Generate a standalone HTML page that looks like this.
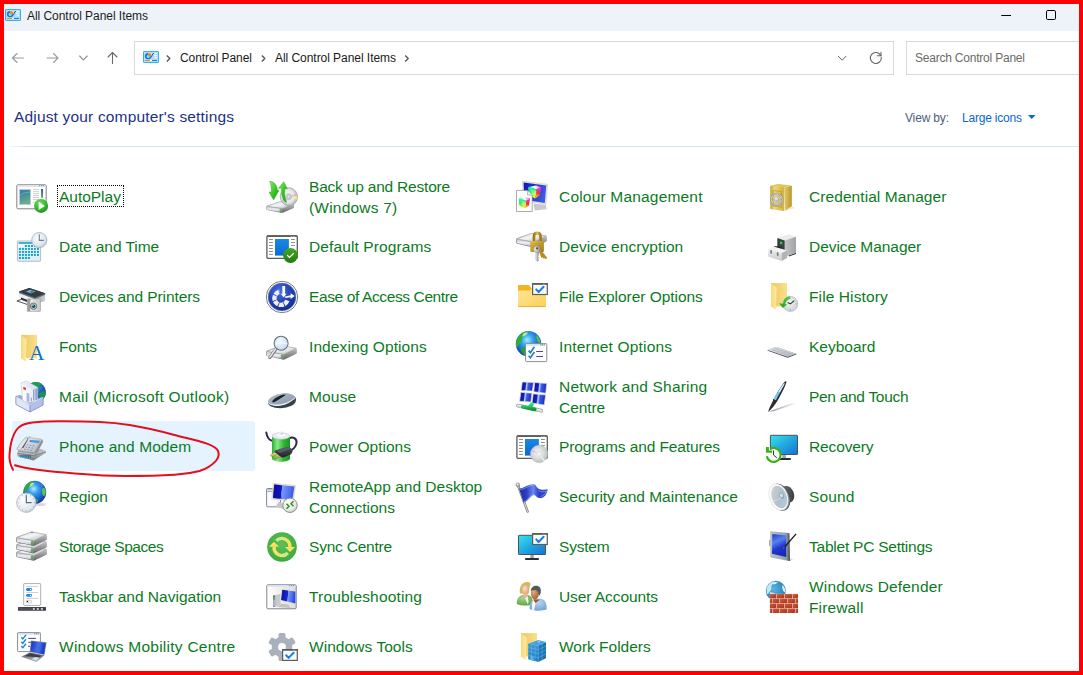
<!DOCTYPE html>
<html lang="en">
<head>
<meta charset="utf-8">
<title>All Control Panel Items</title>
<style>
html,body{margin:0;padding:0;}
body{width:1083px;height:675px;overflow:hidden;background:#fff;font-family:"Liberation Sans",sans-serif;position:relative;}
#frame{position:absolute;left:0;top:0;width:1075px;height:667px;border:4px solid #ff0000;pointer-events:none;z-index:50;}
#titlebar{position:absolute;left:4px;top:4px;width:1075px;height:27px;background:#eef3fa;}
#title{position:absolute;left:27px;top:9px;font-size:12px;line-height:15px;color:#1c1c1c;white-space:nowrap;letter-spacing:-0.048px;}
.abs{position:absolute;}
.box{position:absolute;top:41px;height:32px;border:1px solid #d9d9d9;background:#fff;}
.t12{position:absolute;font-size:12px;line-height:15px;white-space:nowrap;color:#1a1a1a;}
#heading{position:absolute;left:14px;top:108px;font-size:15.5px;line-height:18px;color:#1e3287;white-space:nowrap;letter-spacing:0.17px;}
#divider{position:absolute;left:4px;top:146px;width:1075px;height:1px;background:linear-gradient(to right,#fff 0,#d6e2f5 22px,#d6e2f5 100%);}
.it{position:absolute;width:243px;height:50px;}
.it.sel{background:#e5f3ff;border-radius:3px;}
.it .ic{position:absolute;left:3px;top:9px;overflow:visible;}
.it .tx{position:absolute;left:47px;top:0;height:50px;display:flex;flex-direction:column;justify-content:center;font-size:15.5px;line-height:21px;color:#0b7a1e;white-space:nowrap;}
.it .tx span{display:block;}
.it.two .tx{top:1px;}
#focus{position:absolute;left:57px;top:185px;width:65px;height:20px;border:1px dotted #000;}
</style>
</head>
<body>
<div id="titlebar"></div>
<svg class="abs" style="left:5px;top:9px" width="16" height="12" viewBox="0 0 16 13" preserveAspectRatio="none"><rect x="0.500" y="0.500" width="15" height="12" rx="0.600" fill="#b4def8" stroke="#28b0ec" stroke-width="1"/><path d="M5.200 2.200a3.400 3.400 0 1 0 3.400 3.800h-3.400z" fill="#1478d4"/><path d="M5.200 4.400a1.600 1.600 0 1 0 1.600 1.600h-1.600z" fill="#b4def8"/><path d="M5.200 2.200a3.400 3.400 0 0 1 3.200 3.200h-3.200z" fill="#f08a10"/><path d="M7.500 6.500c2.500 0 1-4 3.500-4" stroke="#1c54b0" stroke-width="1" fill="none"/><path d="M11.500 2.800h2.500M11 5h3M11.500 7.200h2.500" stroke="#fff" stroke-width="0.900"/><path d="M2 10.200h5" stroke="#f08a10" stroke-width="1.100"/><path d="M7 10.200h2" stroke="#fff" stroke-width="1.100"/><path d="M9 10.200h5" stroke="#1478d4" stroke-width="1.100"/></svg>
<div id="title">All Control Panel Items</div>
<svg class="abs" style="left:995px;top:4px" width="84" height="27" viewBox="0 0 84 27">
 <path d="M6.300 11.500h9.700" stroke="#000" stroke-width="1" fill="none"/>
 <rect x="51.500" y="6.500" width="9" height="9" rx="1.300" stroke="#000" stroke-width="1" fill="none"/>
</svg>
<!-- nav arrows -->
<svg class="abs" style="left:8px;top:46px" width="120" height="24" viewBox="0 0 120 24" fill="none" stroke-linecap="round" stroke-linejoin="round">
 <path d="M15.5 12h-11m4.500 -4.500l-4.500 4.500l4.500 4.500" stroke="#9a9a9a" stroke-width="1.1"/>
 <path d="M39 12h11m-4.500 -4.500l4.500 4.500l-4.500 4.500" stroke="#9a9a9a" stroke-width="1.1"/>
 <path d="M71.600 10l3.800 3.800l3.800 -3.800" stroke="#8c8c8c" stroke-width="1.100"/>
 <path d="M104.500 17.500v-11m-4.500 4.500l4.500 -4.500l4.500 4.500" stroke="#6a6a6a" stroke-width="1.100"/>
</svg>
<div class="box" style="left:134px;width:758px;"></div>
<svg class="abs" style="left:143px;top:51px" width="16" height="12" viewBox="0 0 16 13" preserveAspectRatio="none"><rect x="0.500" y="0.500" width="15" height="12" rx="0.600" fill="#b4def8" stroke="#28b0ec" stroke-width="1"/><path d="M5.200 2.200a3.400 3.400 0 1 0 3.400 3.800h-3.400z" fill="#1478d4"/><path d="M5.200 4.400a1.600 1.600 0 1 0 1.600 1.600h-1.600z" fill="#b4def8"/><path d="M5.200 2.200a3.400 3.400 0 0 1 3.200 3.200h-3.200z" fill="#f08a10"/><path d="M7.500 6.500c2.500 0 1-4 3.500-4" stroke="#1c54b0" stroke-width="1" fill="none"/><path d="M11.500 2.800h2.500M11 5h3M11.500 7.200h2.500" stroke="#fff" stroke-width="0.900"/><path d="M2 10.200h5" stroke="#f08a10" stroke-width="1.100"/><path d="M7 10.200h2" stroke="#fff" stroke-width="1.100"/><path d="M9 10.200h5" stroke="#1478d4" stroke-width="1.100"/></svg>
<svg class="abs" style="left:160px;top:50px" width="260" height="16" viewBox="0 0 260 16" fill="none" stroke="#5a5a5a" stroke-width="1.400" stroke-linejoin="round">
 <path d="M6.800 5.400l3 3l-3 3"/><path d="M101.800 5.400l3 3l-3 3"/><path d="M245.200 5.400l3 3l-3 3"/>
</svg>
<div class="t12" style="left:180px;top:51px;letter-spacing:-0.06px">Control Panel</div>
<div class="t12" style="left:275px;top:51px;letter-spacing:-0.048px">All Control Panel Items</div>
<svg class="abs" style="left:830px;top:46px" width="60" height="24" viewBox="0 0 60 24" fill="none" stroke="#666" stroke-width="1.1" stroke-linecap="round" stroke-linejoin="round">
 <path d="M8.200 10.200l3.900 4l3.900 -4" stroke-width="1"/>
 <path d="M51.300 11.400A5.500 5.500 0 1 1 50.800 9.600"/><path d="M47.300 9.800H51V6.200"/>
</svg>
<div class="box" style="left:906px;width:180px;"></div>
<div class="t12" style="left:915px;top:51px;color:#6b6b6b;letter-spacing:-0.215px">Search Control Panel</div>
<div id="heading">Adjust your computer's settings</div>
<div class="t12" style="left:905px;top:111px;color:#4c607a;letter-spacing:-0.163px">View by:</div>
<div class="t12" style="left:962px;top:111px;color:#0a64d8;letter-spacing:-0.205px">Large icons</div>
<svg class="abs" style="left:1027px;top:114px" width="10" height="6" viewBox="0 0 10 6"><path d="M1 1h7.500l-3.750 4z" fill="#0a64d8"/></svg>
<div id="divider"></div>
<div class="it" style="left:12px;top:171px"><svg class="ic" viewBox="0 0 32 32" width="32" height="32"><defs><linearGradient id="apA" x1="0" y1="0" x2="0.300" y2="1"><stop offset="0" stop-color="#3a78b4"/><stop offset="0.400" stop-color="#3f8f9a"/><stop offset="1" stop-color="#6dae8a"/></linearGradient><radialGradient id="apB" cx="0.400" cy="0.300" r="0.800"><stop offset="0" stop-color="#6fe05a"/><stop offset="0.600" stop-color="#2eb32a"/><stop offset="1" stop-color="#168a16"/></radialGradient><linearGradient id="apC" x1="0" y1="0" x2="0" y2="1"><stop offset="0" stop-color="#2450a8"/><stop offset="1" stop-color="#58b060"/></linearGradient></defs>
<rect x="1.800" y="4.800" width="29.400" height="24" rx="1.200" fill="#fdfdfd" stroke="#7f848e" stroke-width="1"/>
<rect x="2.300" y="5.300" width="28.400" height="1.700" fill="#dfe6ef"/>
<path d="M24.200 5.700h1m1 0h1m1 0h1" stroke="#4a68a8" stroke-width="0.900"/>
<rect x="4.600" y="9.600" width="11" height="15" fill="url(#apA)" stroke="#c9c4e2" stroke-width="0.800"/>
<path d="M5 15.500c3-2.500 6-3.300 10.200-3.500" stroke="#9cc8d8" stroke-width="0.600" fill="none" opacity="0.800"/>
<path d="M18 9.600h6M18 11.600h6M18 13.600h6M18 15.500h6M18 17.500h6M18 19.500h6M18 22.500h3" stroke="#c6c6c6" stroke-width="0.800"/>
<rect x="26.100" y="9" width="1.900" height="8.800" fill="url(#apC)"/>
<circle cx="26.100" cy="25.900" r="7" fill="url(#apB)"/>
<path d="M23.700 21.800l6.200 4.100l-6.200 4.100z" fill="#fff"/></svg><div class="tx"><span style="letter-spacing:-0.021px">AutoPlay</span></div></div>
<div class="it" style="left:12px;top:221px"><svg class="ic" viewBox="0 0 32 32" width="32" height="32"><defs><linearGradient id="dtA" x1="0" y1="0" x2="0" y2="1"><stop offset="0" stop-color="#f4fafd"/><stop offset="1" stop-color="#d9edf6"/></linearGradient><radialGradient id="dtB" cx="0.400" cy="0.350" r="0.700"><stop offset="0" stop-color="#fafcfd"/><stop offset="0.700" stop-color="#dfe6ec"/><stop offset="1" stop-color="#b9c3cd"/></radialGradient></defs>
<rect x="2.400" y="11" width="23.200" height="20.300" rx="0.800" fill="url(#dtA)" stroke="#b5b5b5" stroke-width="0.900"/>
<rect x="3.600" y="12" width="20.800" height="1.900" fill="#2eb2d6"/>
<g fill="#14a0c8">
<rect x="9.900" y="15" width="2" height="2"/><rect x="12.900" y="15" width="2" height="2"/><rect x="15.900" y="15" width="2" height="2"/><rect x="18.900" y="15" width="2" height="2"/>
<rect x="3.900" y="17.900" width="2" height="2"/><rect x="6.900" y="17.900" width="2" height="2"/><rect x="9.900" y="17.900" width="2" height="2"/><rect x="12.900" y="17.900" width="2" height="2"/><rect x="15.900" y="17.900" width="2" height="2"/><rect x="18.900" y="17.900" width="2" height="2"/><rect x="22" y="17.900" width="2" height="2"/>
<rect x="3.900" y="20.900" width="2" height="2"/><rect x="6.900" y="20.900" width="2" height="2"/><rect x="9.900" y="20.900" width="2" height="2"/><rect x="12.900" y="20.900" width="2" height="2"/><rect x="15.900" y="20.900" width="2" height="2"/><rect x="18.900" y="20.900" width="2" height="2"/><rect x="22" y="20.900" width="2" height="2"/>
<rect x="3.900" y="23.900" width="2" height="2"/><rect x="6.900" y="23.900" width="2" height="2"/><rect x="9.900" y="23.900" width="2" height="2"/><rect x="12.900" y="23.900" width="2" height="2"/><rect x="15.900" y="23.900" width="2" height="2"/><rect x="18.900" y="23.900" width="2" height="2"/><rect x="22" y="23.900" width="2" height="2"/>
<rect x="3.900" y="27" width="2" height="2"/><rect x="6.900" y="27" width="2" height="2"/><rect x="9.900" y="27" width="2" height="2"/><rect x="12.900" y="27" width="2" height="2"/>
</g>
<circle cx="24.300" cy="10.100" r="7.600" fill="url(#dtB)" stroke="#aab4c0" stroke-width="0.900"/>
<path d="M24.300 4.200v6.200h4.600" stroke="#6b8397" stroke-width="1.100" fill="none"/></svg><div class="tx"><span style="letter-spacing:-0.051px">Date and Time</span></div></div>
<div class="it" style="left:12px;top:271px"><svg class="ic" viewBox="0 0 32 32" width="32" height="32"><defs><linearGradient id="prA" x1="0" y1="0" x2="1" y2="0"><stop offset="0" stop-color="#9a9ea2"/><stop offset="1" stop-color="#cfd1d3"/></linearGradient><linearGradient id="prB" x1="0" y1="0" x2="1" y2="0"><stop offset="0" stop-color="#f7f7f7"/><stop offset="1" stop-color="#c4c6c8"/></linearGradient></defs>
<path d="M4 11.600l10.400-3.500l15.700 5.100v7.800l-10.400 3l-15.700-6z" fill="#eeeff0"/>
<path d="M19.700 17.300l10.400-4.100v7.800l-10.400 3z" fill="url(#prA)"/>
<path d="M4 11.400l10.400-3.300l15.700 5.100v1.600l-10.400 4.300l-15.700-6z" fill="#454c52"/>
<path d="M4 11.400l10.400-3.300l15.700 5.100l-10.400 4.300z" fill="#353b41"/>
<path d="M4 12.400l15.700 6l10.400-4.300" stroke="#8a9096" stroke-width="0.500" fill="none"/>
<path d="M10.600 11.400l5-1.700l5.200 1.800l-5 1.900z" fill="#5aa0ea"/><path d="M14 11l3.500-.3l1.500 1.200l-3 .9z" fill="#3c8a4a"/><path d="M12 11.300l3-.9l1.500.8z" fill="#dbeaf8"/>
<rect x="16.300" y="16.800" width="1.200" height="1.200" fill="#25c040"/>
<path d="M6 17.500l6.500 2.500v2l-6.500-2.600z" fill="#22272b"/>
<path d="M1.900 20.900l4.500-1.500l6.800 2.700l-1.200 2.300z" fill="#fff" stroke="#3c444b" stroke-width="0.900"/>
<rect x="12.300" y="18.900" width="13.200" height="12.500" rx="0.800" fill="url(#prB)" stroke="#9a9d9f" stroke-width="0.600"/>
<rect x="12.300" y="18.900" width="3" height="12.500" fill="#9c9ea0"/>
<circle cx="18.500" cy="26.200" r="3.200" fill="#c4c8cc" stroke="#6a6e72" stroke-width="0.900"/><circle cx="18.500" cy="26.200" r="1.800" fill="#164c5a"/><circle cx="17.900" cy="25.600" r="0.700" fill="#bfe3ee"/>
<rect x="20.500" y="20.300" width="2.500" height="0.900" fill="#d8c890"/></svg><div class="tx"><span style="letter-spacing:-0.106px">Devices and Printers</span></div></div>
<div class="it" style="left:12px;top:321px"><svg class="ic" viewBox="0 0 32 32" width="32" height="32"><defs><linearGradient id="foA" x1="0" y1="0" x2="1" y2="0"><stop offset="0" stop-color="#e9c860"/><stop offset="1" stop-color="#fbe08a"/></linearGradient><linearGradient id="foB" x1="0" y1="0" x2="1" y2="0"><stop offset="0" stop-color="#f6d978"/><stop offset="1" stop-color="#fdeaa6"/></linearGradient></defs>
<rect x="6" y="4.900" width="16" height="23.400" fill="url(#foA)"/>
<path d="M6 4.900l5.700 4.400l-.9 22.500l-4.800-3.500z" fill="url(#foB)"/>
<text x="14.100" y="29.800" font-family="Liberation Serif, serif" font-size="21.500" fill="#0b6fd6">A</text></svg><div class="tx"><span style="letter-spacing:-0.191px">Fonts</span></div></div>
<div class="it" style="left:12px;top:371px"><svg class="ic" viewBox="0 0 32 32" width="32" height="32"><defs><radialGradient id="maA" cx="0.350" cy="0.300" r="0.800"><stop offset="0" stop-color="#5aa0f0"/><stop offset="0.500" stop-color="#2a5fd0"/><stop offset="1" stop-color="#1b3aa0"/></radialGradient><linearGradient id="maB" x1="0" y1="0" x2="1" y2="1"><stop offset="0" stop-color="#eef1fb"/><stop offset="1" stop-color="#a9b6e2"/></linearGradient><linearGradient id="maC" x1="0" y1="0" x2="1" y2="0"><stop offset="0" stop-color="#ffffff"/><stop offset="1" stop-color="#e0e6f4"/></linearGradient></defs>
<circle cx="20.800" cy="12.200" r="10.200" fill="url(#maA)"/>
<path d="M15 3.600c4-2.500 9-2 12 .5c-2 1-5 3-7 4.500c-2-1.500-3.500-3.500-5-5z" fill="#1aa048"/>
<path d="M30.800 10c.5 4-1 8-4.500 10.800c-1-3-3-5.500-2.500-7.500c2.500-1 5-2 7-3.300z" fill="#15964a"/>
<path d="M22.800 8.500l3-2.500l1.500 1l-3 3z" fill="#1aa048"/>
<path d="M1 16.400l4-1l10 5.200l13-3.400v7.800l-13 6.900l-14-7.500z" fill="#c4cdec" stroke="#7d8cc4" stroke-width="0.700"/>
<path d="M2 16.500l3.500-.8l13 6.300l-3.500 2z" fill="#98a6d4"/>
<path d="M6.100 3.200l5.300-2.200l11.300 6.300v13.500l-14.800 3.200z" fill="url(#maC)" stroke="#aab4d8" stroke-width="0.500"/>
<path d="M7 3.400l11.200 6.200M8.500 2.500l11.300 6.300M10 1.900l11.200 6.200" stroke="#c4cce8" stroke-width="0.400"/>
<path d="M12.200 13v9M13.800 13.500v8.200M16.300 17.500v3.800M18.600 9.500v11M20.200 8.800v11.500M21.700 8.200v12" stroke="#4a62a8" stroke-width="0.600"/>
<path d="M8.300 6.700l2.600 1v2.600l-2.600-1z" fill="#f03418"/>
<path d="M1 16.400v8l14 7.500v-7z" fill="#dfe5f7" stroke="#7d8cc4" stroke-width="0.600"/>
<path d="M15 24.900l13-7.700v7.800l-13 6.900z" fill="#b4c0e8" stroke="#7d8cc4" stroke-width="0.600"/>
<path d="M1.500 17.200l13.500 7.400l12.700-7.200" stroke="#f4f6fc" stroke-width="0.600" fill="none"/></svg><div class="tx"><span style="letter-spacing:0.285px">Mail (Microsoft Outlook)</span></div></div>
<div class="it sel" style="left:12px;top:421px"><svg class="ic" viewBox="0 0 32 32" width="32" height="32"><defs><linearGradient id="phA" x1="0" y1="0" x2="1" y2="1"><stop offset="0" stop-color="#f2f3f4"/><stop offset="1" stop-color="#aeb2b6"/></linearGradient><linearGradient id="phB" x1="0" y1="0" x2="0" y2="1"><stop offset="0" stop-color="#c8cacc"/><stop offset="1" stop-color="#74787c"/></linearGradient></defs>
<path d="M2.200 22.100l16.300 2.300l12.500-3.500v1.800l-12.500 7.700l-16-4.200z" fill="url(#phB)"/>
<path d="M2.200 22.100l16.300 2.300l12.500-3.500l-5-2l-20 1z" fill="#b4b8bc"/>
<path d="M2.200 23.300l16.300 2.300l12.500-3.700" stroke="#5e6266" stroke-width="0.600" fill="none"/>
<path d="M4.500 25.200h11.500v3.400l-11.500-2.200z" fill="#5a6066"/>
<path d="M5 25.500h1.300v2.200h-1.300zM7.200 25.700h1.300v2.400h-1.300zM9.400 25.900h1.300v2.500h-1.300zM11.600 26.100h1.300v2.600h-1.300zM13.800 26.300h1.300v2.700h-1.300z" fill="#2c9be0"/>
<path d="M26.800 9.300l1.500 2.100l-6.600 12.300l-2.500-1.200z" fill="#8e9296"/>
<path d="M1.900 18.500l9.500-11.500l15.400 2.300l-7.600 13.500l-15.900-2.300z" fill="url(#phA)" stroke="#9a9ea2" stroke-width="0.500"/>
<path d="M3 21l16 2.400l2.600-.7" stroke="#8a8e92" stroke-width="0.800" fill="none"/>
<path d="M15 9.900l10 .9l-1.100 2.100l-9.500-.9z" fill="#2f8fe8"/><path d="M15.600 10.800l8.500.8" stroke="#8cc4f8" stroke-width="0.400"/>
<path d="M11.500 9l2.200-.8l-5.500 9.800l-1.700-.2z" fill="#2c3036"/>
<path d="M2.600 19.500c-1-1.500 5-10 8-11.500c1.500-.7 2.600.2 1.800 1.500l-6.200 9.500c-1 1.500-2.800 1.600-3.600.5z" fill="#e4e6e8" stroke="#8e9296" stroke-width="0.500"/>
<ellipse cx="4" cy="18.500" rx="1.300" ry="0.900" fill="#f8f8ff" stroke="#a4a8c0" stroke-width="0.300"/>
<g fill="#6f87c1"><ellipse cx="12.500" cy="14.700" rx="0.800" ry="0.500"/><ellipse cx="15.500" cy="15.200" rx="0.800" ry="0.500"/><ellipse cx="18.500" cy="15.700" rx="0.800" ry="0.500"/><ellipse cx="11.200" cy="17" rx="0.800" ry="0.500"/><ellipse cx="14.200" cy="17.500" rx="0.800" ry="0.500"/><ellipse cx="17.200" cy="18" rx="0.800" ry="0.500"/><ellipse cx="10" cy="19.300" rx="0.800" ry="0.500"/><ellipse cx="13" cy="19.800" rx="0.800" ry="0.500"/><ellipse cx="16" cy="20.300" rx="0.800" ry="0.500"/></g>
<rect x="16.700" y="22.300" width="0.900" height="0.900" fill="#20b040"/>
<path d="M14.500 7.500l.5-1.500" stroke="#9a9ea2" stroke-width="0.800"/></svg><div class="tx"><span style="letter-spacing:0.087px">Phone and Modem</span></div></div>
<div class="it" style="left:12px;top:471px"><svg class="ic" viewBox="0 0 32 32" width="32" height="32"><defs><radialGradient id="reA" cx="0.450" cy="0.350" r="0.700"><stop offset="0" stop-color="#b4ecff"/><stop offset="0.300" stop-color="#38a0f0"/><stop offset="0.800" stop-color="#1446b8"/><stop offset="1" stop-color="#0c2a88"/></radialGradient><radialGradient id="reB" cx="0.400" cy="0.350" r="0.750"><stop offset="0" stop-color="#ffffff"/><stop offset="0.700" stop-color="#e4e9ee"/><stop offset="1" stop-color="#b4bec8"/></radialGradient></defs>
<ellipse cx="24" cy="24.500" rx="7" ry="1.600" fill="#000" opacity="0.150"/>
<circle cx="19.700" cy="12.300" r="11.500" fill="url(#reA)"/>
<path d="M10 7c1.500-3 4.500-5 8-5.800c-.5 1.800-2.500 2.800-3.500 4.800c-.8 1.800-1.500 3.500-3 5c-.8 1-.6 2.500-1.500 3c-.8-2.500-.8-5 0-7z" fill="#2cae2c"/>
<path d="M15.500 3.500c1.500-1 3-1 4 0c-1.500 1.500-3 3-5 3.500z" fill="#b8e88a"/>
<path d="M27.500 8.500c1.500-1.500 3 0 3.200 3c.2 2.500-.8 4.500-2 4.500c-1.500-1-2-5-1.200-7.500z" fill="#5cc83c"/>
<path d="M26 3.500l1.500 1.500l-1 1.500z" fill="#3cb83c"/>
<path d="M21 19.500l2.500-.8l-.5 3l-1.500 1z" fill="#2cae2c"/>
<circle cx="11.300" cy="22.700" r="9.700" fill="url(#reB)" stroke="#aeb8c2" stroke-width="0.800"/>
<g stroke="#8ea2b8" stroke-width="0.700"><path d="M11.300 14v1.200M11.300 30.200v1.200M2.600 22.700h1.200M18.800 22.700h1.200M15.600 15.200l-.6 1M7 30.200l.6-1M18.800 18.400l-1 .6M3.800 27l1-.6M18.800 27l-1-.6M3.800 18.400l1 .6M15.600 30.200l-.6-1M7 15.200l.6 1"/></g>
<path d="M11.300 15.200v7.500h5.300" stroke="#4f6f86" stroke-width="1.200" fill="none"/></svg><div class="tx"><span style="letter-spacing:-0.045px">Region</span></div></div>
<div class="it" style="left:12px;top:521px"><svg class="ic" viewBox="0 0 32 32" width="32" height="32"><defs><linearGradient id="stA" x1="0" y1="0" x2="0" y2="1"><stop offset="0" stop-color="#b4b6ba"/><stop offset="0.350" stop-color="#f0eefa"/><stop offset="0.700" stop-color="#d4d2e0"/><stop offset="1" stop-color="#94969a"/></linearGradient><linearGradient id="stB" x1="0" y1="0" x2="0" y2="1"><stop offset="0" stop-color="#e8e8ea"/><stop offset="0.450" stop-color="#a4a6a8"/><stop offset="1" stop-color="#626466"/></linearGradient><linearGradient id="stC" x1="0" y1="0" x2="1" y2="1"><stop offset="0" stop-color="#c4c6c8"/><stop offset="0.450" stop-color="#f4f5f6"/><stop offset="1" stop-color="#b4b6b8"/></linearGradient>
<g id="stD"><path d="M1 8.200c0-.8.400-1.200 1-1.500l13.900-5.100c.6-.2 1.200-.2 1.800-.1l13.200 2.500c.7.200 1 .6 1 1.300v3.600c0 .6-.3 1-1 1.400l-11.500 5.400c-.6.300-1.200.3-1.800.1l-15.400-3.400c-.8-.2-1.200-.7-1.200-1.500z" fill="url(#stB)"/><path d="M2 7.500l14.300-5.600l14.800 2.700l-11.800 6z" fill="url(#stC)" stroke="#9c9ea0" stroke-width="0.500"/><path d="M1.800 8.600l16.500 2.700v4.200l-16.500-3.800z" fill="url(#stA)"/><path d="M1.800 8.700l16.500 2.700" stroke="#fafafa" stroke-width="0.500"/><rect x="16.100" y="11.300" width="1.900" height="3.600" rx="0.500" fill="#3fd020" stroke="#6a3a8a" stroke-width="0.300"/></g></defs>
<use href="#stD" y="14.800"/><use href="#stD" y="7.400"/><use href="#stD"/>
<ellipse cx="17" cy="2.300" rx="1.500" ry="0.500" fill="#7a7c7e"/></svg><div class="tx"><span style="letter-spacing:-0.423px">Storage Spaces</span></div></div>
<div class="it" style="left:12px;top:571px"><svg class="ic" viewBox="0 0 32 32" width="32" height="32"><rect x="8.700" y="3.600" width="17" height="21.800" rx="0.600" fill="#fff" stroke="#a6a6a6" stroke-width="0.900"/>
<path d="M11.100 6.500h12M11.100 12.500h12M11.100 18.400h12" stroke="#c4c4c4" stroke-width="0.800"/>
<rect x="11.100" y="8.100" width="6" height="2.800" rx="1.400" fill="#1a88e0"/><circle cx="15.600" cy="9.500" r="0.700" fill="#fff"/>
<rect x="11.100" y="14" width="6" height="2.800" rx="1.400" fill="#1a88e0"/><circle cx="15.600" cy="15.400" r="0.700" fill="#fff"/>
<rect x="11.400" y="20.300" width="5.300" height="2.400" rx="0.600" fill="#fff" stroke="#b0b0b0" stroke-width="0.600"/><rect x="11.900" y="20.900" width="1.200" height="1.200" fill="#111"/>
<rect x="3" y="26.900" width="28" height="3.900" rx="0.500" fill="#3b3f43"/>
<rect x="4" y="27.700" width="13" height="2.300" fill="#4d5156"/>
<rect x="17.800" y="27.900" width="2" height="2" fill="#c8ccd2"/><rect x="21.800" y="27.900" width="2" height="2" fill="#c8ccd2"/><rect x="25.900" y="27.900" width="2" height="2" fill="#c8ccd2"/></svg><div class="tx"><span style="letter-spacing:0.01px">Taskbar and Navigation</span></div></div>
<div class="it" style="left:12px;top:621px"><svg class="ic" viewBox="0 0 32 32" width="32" height="32"><defs><linearGradient id="moA" x1="0" y1="0" x2="1" y2="0.300"><stop offset="0" stop-color="#1430b0"/><stop offset="0.500" stop-color="#3a62e6"/><stop offset="1" stop-color="#1840c8"/></linearGradient><linearGradient id="moB" x1="0" y1="0" x2="0" y2="1"><stop offset="0" stop-color="#5a5e64"/><stop offset="1" stop-color="#b9bcc0"/></linearGradient></defs>
<rect x="2.600" y="2.600" width="22.800" height="19" rx="0.800" fill="#fff" stroke="#7d828b" stroke-width="0.900"/>
<rect x="3.100" y="3.100" width="21.800" height="1.500" fill="#d5dde8"/>
<path d="M19.300 3.800h1m.7 0h1m.7 0h1" stroke="#3f5fa8" stroke-width="0.900"/>
<g fill="none" stroke="#1f88d2" stroke-width="1.500"><path d="M6.300 7.300l1.500 1.600l3.200-4"/><path d="M6.300 11.700l1.500 1.600l3.200-4"/><path d="M6.300 16.100l1.500 1.600l3.200-4"/></g>
<path d="M13.200 8.400h7.700M13.200 12.300h3M13.200 16.300h2" stroke="#4a3a88" stroke-width="1"/>
<path d="M6.100 26.800l8.600-4.400l14.800 2.900l-8 6.800z" fill="url(#moB)"/>
<path d="M9.500 26.300l5.500-2.800l11.500 2.300l-1.500 1.500z" fill="#3a3e44"/>
<path d="M16.500 29l4-2l4 1l-3.500 2.600z" fill="#cfe2f2"/>
<path d="M15.900 10.500l15.700 1.800l-2.100 12.700l-14.800-2.900z" fill="#8c9096"/>
<path d="M16.500 11.200l14.400 1.700l-1.900 11.300l-13.500-2.600z" fill="url(#moA)"/>
<path d="M22 11.800l5 .6l-1.800 11l-4.700-.9z" fill="#5a7cf0" opacity="0.450"/></svg><div class="tx"><span style="letter-spacing:0.256px">Windows Mobility Centre</span></div></div>
<div class="it two" style="left:262px;top:171px"><svg class="ic" viewBox="0 0 32 32" width="32" height="32"><defs><linearGradient id="buA" x1="0" y1="0" x2="1" y2="1"><stop offset="0" stop-color="#8cf060"/><stop offset="0.500" stop-color="#3cc828"/><stop offset="1" stop-color="#1c9a14"/></linearGradient><radialGradient id="buB" cx="0.450" cy="0.450" r="0.600"><stop offset="0" stop-color="#ffffff"/><stop offset="0.600" stop-color="#e4e6e8"/><stop offset="1" stop-color="#a8acb0"/></radialGradient><linearGradient id="buC" x1="0" y1="0" x2="0" y2="1"><stop offset="0" stop-color="#f0f0f2"/><stop offset="0.500" stop-color="#c0c2c4"/><stop offset="1" stop-color="#8a8c8e"/></linearGradient></defs>
<use href="#stD" transform="translate(0.400 20.100) scale(0.900 0.800)"/>
<ellipse cx="23.900" cy="16.700" rx="8.700" ry="9" fill="url(#buB)" stroke="#9a9ea2" stroke-width="0.600" transform="rotate(-15 23.900 16.700)"/>
<path d="M23.900 16.700l8-3.500l.7 3z" fill="#f0a0d0" opacity="0.800"/><path d="M23.900 16.700l8.700-.5l-.8 3.500z" fill="#f4f088" opacity="0.900"/><path d="M23.900 16.700l-7 3l1.500 2.500z" fill="#c8a0d8" opacity="0.700"/><path d="M23.900 16.700l-5.500 5.500l2.500 1.800z" fill="#a0d8a0" opacity="0.700"/>
<circle cx="23.600" cy="16.700" r="3" fill="#d0d4d8" stroke="#a0a4a8" stroke-width="0.500"/><circle cx="23.600" cy="16.700" r="1.100" fill="#fff" stroke="#888" stroke-width="0.400"/>
<path d="M4.600 1.300c4 0 7.500 3 8 9.500l1.500-.5l-5.500 9.600l-4.700-8l2.300.2c.5-4.500-.5-8.500-1.600-10.800z" fill="url(#buA)" stroke="#28a018" stroke-width="0.400"/>
<path d="M18.800 1.700l3.500 7l-2.300-.3c-.8 4.500-.3 9.500 1.400 13.900c-3-1-5.500-6.500-5-14.300l-3 .4z" fill="url(#buA)" stroke="#28a018" stroke-width="0.400"/></svg><div class="tx"><span style="letter-spacing:-0.198px">Back up and Restore</span><span style="letter-spacing:0.206px">(Windows 7)</span></div></div>
<div class="it" style="left:262px;top:221px"><svg class="ic" viewBox="0 0 32 32" width="32" height="32"><defs><linearGradient id="dpA" x1="0" y1="0" x2="0" y2="1"><stop offset="0" stop-color="#1888e4"/><stop offset="1" stop-color="#0a6ad0"/></linearGradient><linearGradient id="dpB" x1="0" y1="0" x2="0" y2="1"><stop offset="0" stop-color="#46a820"/><stop offset="1" stop-color="#1f7a10"/></linearGradient></defs>
<rect x="1.900" y="5.900" width="30.400" height="22.400" rx="1" fill="#fff" stroke="#5e5c5a" stroke-width="1.300"/>
<rect x="1.900" y="5.300" width="30.400" height="1.800" rx="0.800" fill="#5e5c5a"/>
<path d="M26.200 6.500h.8m.8 0h.8m.8 0h.8" stroke="#eee" stroke-width="0.700"/>
<rect x="10" y="9" width="13.900" height="16.600" fill="url(#dpA)"/>
<path d="M4 9.500h3.900M4 12.500h3.900M4 15.400h3.900M4 18.500h3.900M4 21.500h3.900M4 24.400h3.900M26 9.500h3.900M26 12.500h3.900M26 15.400h3.900" stroke="#8c8c8c" stroke-width="1"/>
<circle cx="25.500" cy="25.500" r="7.400" fill="url(#dpB)"/>
<path d="M22.100 25l2.300 2.400l4.400-4.100" stroke="#fff" stroke-width="1.200" fill="none"/></svg><div class="tx"><span style="letter-spacing:0.106px">Default Programs</span></div></div>
<div class="it" style="left:262px;top:271px"><svg class="ic" viewBox="0 0 32 32" width="32" height="32"><defs><radialGradient id="eaA" cx="0.400" cy="0.300" r="0.800"><stop offset="0" stop-color="#4a6ee0"/><stop offset="0.600" stop-color="#1c3cb0"/><stop offset="1" stop-color="#142a88"/></radialGradient></defs>
<circle cx="17" cy="17" r="15.700" fill="#fff" stroke="#5a5e68" stroke-width="0.800"/>
<circle cx="17" cy="17" r="13.900" fill="url(#eaA)" stroke="#7a7e88" stroke-width="0.600"/>
<path d="M22.400 20.500A6.700 6.700 0 1 1 14.940 11.600" fill="none" stroke="#f0eee8" stroke-width="4.400" stroke-dasharray="4.700 0.800"/>
<path d="M17.300 6h2.800v7.800h1.500l-2.900 3.600l-2.900-3.600h1.500z" fill="#fafafa"/>
<path d="M20 16.600l5.600-1.400v-2l4.200 2.700l-4.200 3v-1.700l-5.200.8z" fill="#fafafa"/></svg><div class="tx"><span style="letter-spacing:-0.381px">Ease of Access Centre</span></div></div>
<div class="it" style="left:262px;top:321px"><svg class="ic" viewBox="0 0 32 32" width="32" height="32"><defs><radialGradient id="inA" cx="0.400" cy="0.350" r="0.700"><stop offset="0" stop-color="#f4faff"/><stop offset="1" stop-color="#bcd8f4"/></radialGradient><linearGradient id="inB" x1="0" y1="0" x2="1" y2="1"><stop offset="0" stop-color="#f4f4f4"/><stop offset="1" stop-color="#8a8c8e"/></linearGradient></defs>
<use href="#stD" y="13.700"/>
<path d="M11.400 18.500l-6.600 9" stroke="#7a7c80" stroke-width="3.200" stroke-linecap="round"/>
<path d="M11.200 18.300l-6.400 8.800" stroke="#e4e6e8" stroke-width="1.600" stroke-linecap="round"/>
<circle cx="16.100" cy="13.200" r="7" fill="url(#inA)" stroke="#6e7074" stroke-width="1.100"/>
<path d="M10 14.500c3-1.500 8-2 12.500-.5" stroke="#fff" stroke-width="1.200" fill="none" opacity="0.700"/></svg><div class="tx"><span style="letter-spacing:0.098px">Indexing Options</span></div></div>
<div class="it" style="left:262px;top:371px"><svg class="ic" viewBox="0 0 32 32" width="32" height="32"><defs><linearGradient id="muA" x1="0" y1="0" x2="1" y2="1"><stop offset="0" stop-color="#b4c0cc"/><stop offset="1" stop-color="#8496a8"/></linearGradient></defs>
<path d="M3 22.500c0-4 8-9 17-9c7 0 11 2.500 11 6c0 2-1 4.500-4 6c-4 2-10 3-15 2.500c-5-.5-9-2.500-9-5.500z" fill="#36424a"/>
<path d="M3 22c0-4 8-8.500 17-8.500c6 0 10 2 10.500 4.500c-3 3-9 7-15.500 7.800c-6 .7-12-.8-12-3.800z" fill="#e8ecf0"/>
<path d="M3.200 21.300c.3-3.800 8-7.800 16.800-7.800c5.500 0 9.500 1.800 10 3.800c-3 3-8.500 6.300-15 7c-6 .7-12-0.200-11.800-3z" fill="url(#muA)"/>
<path d="M7.300 21.800c-.5-1.500 5-6 12-7.300c1-.2 1.500.5.800 1c-3 2-7 4.500-10.500 6.500c-.9.500-2 .6-2.300-.2z" fill="#1e2226"/>
<rect x="18.800" y="13.900" width="1.500" height="0.900" fill="#30c050" transform="rotate(-15 19.500 14.300)"/></svg><div class="tx"><span style="letter-spacing:0.167px">Mouse</span></div></div>
<div class="it" style="left:262px;top:421px"><svg class="ic" viewBox="0 0 32 32" width="32" height="32"><defs><linearGradient id="poA" x1="0" y1="0" x2="1" y2="0"><stop offset="0" stop-color="#2cb02c"/><stop offset="0.300" stop-color="#8ae88a"/><stop offset="0.650" stop-color="#30b830"/><stop offset="1" stop-color="#1c9420"/></linearGradient><linearGradient id="poB" x1="0" y1="0" x2="0" y2="1"><stop offset="0" stop-color="#50545e"/><stop offset="1" stop-color="#1e2028"/></linearGradient><linearGradient id="poC" x1="0" y1="0" x2="0" y2="1"><stop offset="0" stop-color="#f8e8a0"/><stop offset="1" stop-color="#b8862a"/></linearGradient></defs>
<path d="M1.300 2.500c.5 4 2.500 7.500 6.500 8.500M24.500 8c4-1.500 7.500 1 7 5c-.4 3-2.500 5.500-5 7" stroke="#2a2a50" stroke-width="2" fill="none" stroke-linecap="round"/>
<path d="M7 6.500v22c0 1.800 4 3.300 9 3.300s9-1.500 9-3.300v-22z" fill="url(#poA)"/>
<ellipse cx="16" cy="6" rx="9" ry="3.300" fill="#e8ecf0" stroke="#b8c0c8" stroke-width="0.500"/>
<ellipse cx="16" cy="4.800" rx="4.500" ry="1.800" fill="#fff"/><ellipse cx="16" cy="3.200" rx="3" ry="1.300" fill="#f4f8fc" stroke="#c8d0d8" stroke-width="0.400"/><ellipse cx="16.800" cy="3.600" rx="1.200" ry="0.500" fill="#8cc8f0"/>
<path d="M5.600 24.600l6-2.600l1 1.800l-6 2.600c-.8.300-1.600-1.400-1-1.800zM10 27.400l6-2.600l1 1.800l-6 2.600c-.8.300-1.600-1.400-1-1.800z" fill="url(#poC)" stroke="#a07820" stroke-width="0.300"/>
<path d="M9.900 20.600l11.600-3.600c2-.5 5 .8 5.900 2.700c.6 1.500-.3 3.800-1.800 4.700l-7.100 3c-1 .4-2 .2-2.700-.6l-5.600-4.200c-.8-.7-1-1.600-.3-2z" fill="url(#poB)"/>
<path d="M11 20.800l10.500-3.200c1.500-.4 3.500.2 4.500 1.200l-11 4.200z" fill="#6a6e7a" opacity="0.600"/></svg><div class="tx"><span style="letter-spacing:0.027px">Power Options</span></div></div>
<div class="it two" style="left:262px;top:471px"><svg class="ic" viewBox="0 0 32 32" width="32" height="32"><defs><linearGradient id="rmA" x1="0" y1="0" x2="1" y2="0.100"><stop offset="0" stop-color="#0a10a8"/><stop offset="0.420" stop-color="#1420c8"/><stop offset="0.450" stop-color="#7a9afc"/><stop offset="1" stop-color="#3a5ae8"/></linearGradient><radialGradient id="rmB" cx="0.400" cy="0.350" r="0.700"><stop offset="0" stop-color="#ffffff"/><stop offset="0.700" stop-color="#e8e8e8"/><stop offset="1" stop-color="#c0c0c0"/></radialGradient></defs>
<rect x="1.600" y="8.500" width="14" height="18.300" rx="1" fill="#fbfbfb" stroke="#707a90" stroke-width="0.900"/>
<path d="M2.200 9.800h12M2.200 11.500h12" stroke="#8a9ab8" stroke-width="0.800"/>
<path d="M13.800 21.500l-3 5.300l7.700 2.200l4-3z" fill="#c4c6c8"/>
<path d="M8.100 3.100l22.600 2.400l-2.400 16l-21.600-2.400z" fill="#e4e2d4" stroke="#c8c6b4" stroke-width="0.400"/>
<path d="M9.200 4.400l20.200 2.100l-2.100 13.600l-19.300-2.100z" fill="url(#rmA)"/>
<path d="M9.200 4.400l6 .6l1.500 13.800l-8.700-.8z" fill="#0808a0" opacity="0.500"/>
<circle cx="25" cy="25.300" r="7.200" fill="url(#rmB)" stroke="#8a8a8a" stroke-width="0.900"/>
<path d="M21.500 23.800l2.500 2.500l-2.500 2.500M28.500 21.200l-2.500 2.500l2.500 2.500" stroke="#2a9a1a" stroke-width="1.500" fill="none"/></svg><div class="tx"><span style="letter-spacing:0.001px">RemoteApp and Desktop</span><span style="letter-spacing:-0.027px">Connections</span></div></div>
<div class="it" style="left:262px;top:521px"><svg class="ic" viewBox="0 0 32 32" width="32" height="32"><defs><radialGradient id="syA" cx="0.500" cy="0.400" r="0.650"><stop offset="0" stop-color="#5cc058"/><stop offset="1" stop-color="#3aa83c"/></radialGradient><linearGradient id="syB" x1="0" y1="0" x2="1" y2="0"><stop offset="0" stop-color="#c8e890"/><stop offset="1" stop-color="#fce060"/></linearGradient><linearGradient id="syC" x1="1" y1="0" x2="0" y2="0"><stop offset="0" stop-color="#c8e890"/><stop offset="1" stop-color="#fce060"/></linearGradient></defs>
<circle cx="17" cy="17" r="14.800" fill="url(#syA)"/>
<path d="M11.300 10.800a8 8 0 0 1 13.600 6.200" stroke="url(#syB)" stroke-width="3.400" fill="none"/>
<path d="M20 17h10.100l-5.100 5.100z" fill="#fce060"/>
<path d="M22.800 23a8 8 0 0 1 -13.700-6.300" stroke="url(#syC)" stroke-width="3.400" fill="none"/>
<path d="M4 16.700h10.100l-5.100-5z" fill="#fce060"/></svg><div class="tx"><span style="letter-spacing:-0.21px">Sync Centre</span></div></div>
<div class="it" style="left:262px;top:571px"><svg class="ic" viewBox="0 0 32 32" width="32" height="32"><defs><linearGradient id="trA" x1="0" y1="0" x2="1" y2="0.100"><stop offset="0" stop-color="#0a10a8"/><stop offset="0.480" stop-color="#1828c8"/><stop offset="0.520" stop-color="#7a9afc"/><stop offset="1" stop-color="#2a48e0"/></linearGradient><linearGradient id="trB" x1="0" y1="0" x2="1" y2="0"><stop offset="0" stop-color="#fff"/><stop offset="1" stop-color="#dcdcdc"/></linearGradient></defs>
<rect x="1.800" y="4.800" width="29.400" height="24" rx="1.200" fill="url(#trB)" stroke="#7f848e" stroke-width="1"/>
<rect x="2.300" y="5.300" width="28.400" height="1.700" fill="#dfe6ef"/>
<path d="M24.200 5.700h1m1 0h1m1 0h1" stroke="#4a68a8" stroke-width="0.900"/>
<path d="M10.200 15.300l5.400-1.500v10.600l-5.400 2.700z" fill="#c8cacc"/>
<rect x="8.100" y="15.300" width="2.100" height="11.800" rx="0.400" fill="#6a6c78"/><rect x="8.400" y="19.500" width="1.500" height="7" fill="#c0c0d8"/>
<circle cx="9.200" cy="17.800" r="0.900" fill="#30e030"/>
<path d="M12 27l5-3.500l6 1l3 3.500z" fill="#c0c2c4"/>
<path d="M16.400 8.700l14 1.800v13.900l-15.400-3.500z" fill="#e4e2d4"/>
<path d="M17.300 9.800l13.100 1.600v12l-14.300-3.300z" fill="url(#trA)"/></svg><div class="tx"><span style="letter-spacing:0.172px">Troubleshooting</span></div></div>
<div class="it" style="left:262px;top:621px"><svg class="ic" viewBox="0 0 32 32" width="32" height="32"><defs><g id="wtT"><rect x="-3.500" y="-14" width="7" height="6" rx="1.500"/></g></defs>
<g transform="translate(17 17)" fill="#a9b1bd"><use href="#wtT"/><use href="#wtT" transform="rotate(60)"/><use href="#wtT" transform="rotate(120)"/><use href="#wtT" transform="rotate(180)"/><use href="#wtT" transform="rotate(240)"/><use href="#wtT" transform="rotate(300)"/><circle r="10.300"/></g>
<circle cx="17" cy="17" r="3.900" fill="#fff"/>
<rect x="17.600" y="19.600" width="14.700" height="10.800" fill="#fafafa" stroke="#5e5c5a" stroke-width="1.200"/>
<rect x="17" y="19" width="15.900" height="1.700" fill="#5e5c5a"/>
<path d="M28 20h.7m.8 0h.7" stroke="#eee" stroke-width="0.600"/>
<path d="M21.200 25.300l2.400 2.600l5-5.200" stroke="#1a80e0" stroke-width="2" fill="none" stroke-linecap="round" stroke-linejoin="round"/></svg><div class="tx"><span style="letter-spacing:0.059px">Windows Tools</span></div></div>
<div class="it" style="left:512px;top:171px"><svg class="ic" viewBox="0 0 32 32" width="32" height="32"><defs><linearGradient id="coA" x1="0" y1="0" x2="1" y2="0.300"><stop offset="0" stop-color="#0c14b8"/><stop offset="1" stop-color="#3a5ae4"/></linearGradient>
<linearGradient id="coL" x1="0" y1="0" x2="0.300" y2="1"><stop offset="0" stop-color="#20f0f0"/><stop offset="0.500" stop-color="#30f040"/><stop offset="1" stop-color="#f8f820"/></linearGradient>
<linearGradient id="coR" x1="0.500" y1="0" x2="0.300" y2="1"><stop offset="0" stop-color="#f030f0"/><stop offset="0.500" stop-color="#f83030"/><stop offset="1" stop-color="#f8e020"/></linearGradient>
<linearGradient id="coT" x1="0" y1="0.500" x2="1" y2="0.500"><stop offset="0" stop-color="#30f0f0"/><stop offset="0.500" stop-color="#ffffff"/><stop offset="1" stop-color="#f040f0"/></linearGradient>
<g id="coQ"><path d="M0 1.500l8 -1.500l5 1.800l-4.500 2.200z" fill="url(#coT)"/><path d="M0 1.500l8.500 2.500l-1.500 9l-6.500-3.500z" fill="url(#coL)"/><path d="M8.500 4l4.500-2.200l-1.500 8l-4.500 3.200z" fill="url(#coR)"/><path d="M3 4l5.500 1.500l-1 5l-4-2z" fill="#fff" opacity="0.350"/></g></defs>
<path d="M18.500 23.500l12.500 1.500l.6 4.200l-11.900 1.200z" fill="#c8cacc"/>
<path d="M7.300 1l25.400 3.300l-1.700 20.100l-22.900-3.500z" fill="#e6e4d6" stroke="#c4c2b0" stroke-width="0.400"/>
<path d="M8.600 2.400l22.700 3l-1.500 17.500l-20.500-3.100z" fill="url(#coA)"/>
<use href="#coQ" x="13.200" y="5.500"/>
<path d="M1.500 10.400h11l4.700 4.700v16.400h-15.700z" fill="#fdfdfd" stroke="#8a8a8a" stroke-width="0.700"/>
<path d="M12.500 10.400v4.700h4.700" fill="#e8e8e8" stroke="#8a8a8a" stroke-width="0.500"/>
<use href="#coQ" x="0" y="0" transform="translate(3.800 17) scale(0.880)"/></svg><div class="tx"><span style="letter-spacing:0.19px">Colour Management</span></div></div>
<div class="it" style="left:512px;top:221px"><svg class="ic" viewBox="0 0 32 32" width="32" height="32"><defs><linearGradient id="enA" x1="0" y1="0" x2="1" y2="1"><stop offset="0" stop-color="#e8c858"/><stop offset="0.500" stop-color="#c49a2a"/><stop offset="1" stop-color="#a87c18"/></linearGradient><linearGradient id="enB" x1="0" y1="0" x2="1" y2="0"><stop offset="0" stop-color="#9a7414"/><stop offset="0.500" stop-color="#e4c050"/><stop offset="1" stop-color="#a07818"/></linearGradient><linearGradient id="enC" x1="0" y1="0" x2="1" y2="0"><stop offset="0" stop-color="#f4f4f4"/><stop offset="1" stop-color="#8a8c90"/></linearGradient></defs>
<use href="#stD" y="1.400"/>
<path d="M19 11.500v-4.500c0-5.500 6.500-5.500 6.500 0v4.500" stroke="url(#enB)" stroke-width="2.700" fill="none"/>
<rect x="15.300" y="11.300" width="13.600" height="10.800" rx="1" fill="url(#enA)"/>
<path d="M15.500 13.500h13.200M15.500 15.500h13.200M15.500 17.500h13.200" stroke="#b08a20" stroke-width="0.500" opacity="0.700"/>
<path d="M25.600 19.700l6.500 8.300l-1.500 1l-1-1.300l-1 .8l-1-1.400l-1 .6l-2.500-6.500z" fill="#b8901c" stroke="#8a6810" stroke-width="0.300"/>
<path d="M20.800 22v8l1.400 1.600l1.300-1v-1.200l-.8-.6l.8-.8v-1l-.8-.7l.8-.8v-3.500z" fill="url(#enC)" stroke="#6a6c70" stroke-width="0.300"/>
<circle cx="22.100" cy="19.200" r="3.400" fill="url(#enC)" stroke="#7a7c80" stroke-width="0.400"/><circle cx="22.100" cy="18.300" r="1.100" fill="#6a5010"/></svg><div class="tx"><span style="letter-spacing:0.062px">Device encryption</span></div></div>
<div class="it" style="left:512px;top:271px"><svg class="ic" viewBox="0 0 32 32" width="32" height="32"><defs><linearGradient id="feA" x1="0" y1="0" x2="1" y2="1"><stop offset="0" stop-color="#fde79a"/><stop offset="1" stop-color="#fccf58"/></linearGradient></defs>
<path d="M3 6.200c0-.8.500-1.300 1.300-1.300h8.700c.6 0 1 .2 1.400.7l2.100 2.600h13.200c.8 0 1.300.5 1.300 1.300v14h-28z" fill="#f4b41c"/>
<path d="M3 11.200c0-.5.300-.8.800-.8h10.500c.5 0 .9-.2 1.300-.6l1-1.200c.3-.3.700-.5 1.200-.5h11.900c.8 0 1.300.5 1.300 1.300v16.200c0 .8-.5 1.300-1.300 1.300h-25.400c-.8 0-1.300-.5-1.300-1.300z" fill="url(#feA)"/>
<path d="M3 25.500c0 .8.500 1.300 1.300 1.300h25.400c.8 0 1.300-.5 1.300-1.300v-.4c0 .6-.5 1-1.300 1h-25.400c-.8 0-1.300-.4-1.300-1z" fill="#e8a41c"/>
<g transform="translate(0 -15.900)"><rect x="17.600" y="19.600" width="14.700" height="10.800" fill="#fafafa" stroke="#5e5c5a" stroke-width="1.200"/><rect x="17" y="19" width="15.900" height="1.700" fill="#5e5c5a"/><path d="M28 20h.7m.8 0h.7" stroke="#eee" stroke-width="0.600"/><path d="M21.200 25.300l2.400 2.600l5-5.200" stroke="#1a80e0" stroke-width="2" fill="none" stroke-linecap="round" stroke-linejoin="round"/></g></svg><div class="tx"><span style="letter-spacing:-0.047px">File Explorer Options</span></div></div>
<div class="it" style="left:512px;top:321px"><svg class="ic" viewBox="0 0 32 32" width="32" height="32"><defs><radialGradient id="ieA" cx="0.450" cy="0.350" r="0.700"><stop offset="0" stop-color="#a8ecff"/><stop offset="0.300" stop-color="#38a8f0"/><stop offset="0.750" stop-color="#1850c0"/><stop offset="1" stop-color="#10308c"/></radialGradient></defs>
<circle cx="13.500" cy="13.800" r="12.700" fill="url(#ieA)"/>
<path d="M2 9.500c1.500-4 5-7 9.500-8c-.5 2-3 3-4 5.500c-1 2.500-.5 5-2.500 6.500c-2 1.500-2 3.500-3.500 4c-.8-2.500-.5-5.500.5-8z" fill="#30b030"/>
<path d="M8.500 3.500c1.500-1 3.500-1.300 4.500-.5c-1.500 1.500-3.500 3-6 3.500z" fill="#c8f090"/>
<path d="M21.500 5c2 1.500 3.800 4.500 4 8c-1.500.5-3-1-3.500-3.500c-.5-2-.9-3-.5-4.500z" fill="#50c840"/>
<path d="M5.500 18.500c2-1.500 5-1 6 1c1 2 .5 5-1 6.500c-2.500-1.500-4.500-4.500-5-7.500z" fill="#28a428"/>
<rect x="10.600" y="13.600" width="21.200" height="18" rx="0.900" fill="#fdfdfd" stroke="#7d828b" stroke-width="0.900"/>
<rect x="11.100" y="14.100" width="20.200" height="1.500" fill="#d5dde8"/>
<path d="M25.300 14.800h1m.7 0h1m.7 0h1" stroke="#3f5fa8" stroke-width="0.900"/>
<path d="M13.600 20.600l1.800 2l4-5.800M13.600 25.800l1.800 2l4-5.800" stroke="#1c80c8" stroke-width="1.600" fill="none"/>
<path d="M21.200 21.500h6.800M21.200 26.500h6.800" stroke="#54488c" stroke-width="1.100"/></svg><div class="tx"><span style="letter-spacing:0.18px">Internet Options</span></div></div>
<div class="it two" style="left:512px;top:371px"><svg class="ic" viewBox="0 0 32 32" width="32" height="32"><defs><linearGradient id="nwA" x1="0" y1="0" x2="1" y2="0.100"><stop offset="0" stop-color="#0a10a8"/><stop offset="0.380" stop-color="#1420c0"/><stop offset="0.470" stop-color="#c0d0fc"/><stop offset="0.620" stop-color="#3a58e4"/><stop offset="1" stop-color="#1a2cc4"/></linearGradient><linearGradient id="nwB" x1="0" y1="0" x2="0" y2="1"><stop offset="0" stop-color="#f4f4f4"/><stop offset="1" stop-color="#a8acb0"/></linearGradient><linearGradient id="nwC" x1="0" y1="0" x2="0" y2="1"><stop offset="0" stop-color="#40e070"/><stop offset="1" stop-color="#0c9a3c"/></linearGradient></defs>
<g stroke="#e4e0cc" stroke-width="0.700" fill="url(#nwA)"><path d="M7.300 1.900l11.200.6l-1.200 8.600l-11.200-.6z"/><path d="M19.700 2.500l12.100.9l-1.100 9.800l-11.900-1.500z"/><path d="M5.800 12.300l11.200.9l-1.200 8.900l-11.200-.9z"/><path d="M18.200 13.800l12.500 1.200l-1.500 10l-12.200-2z"/></g>
<path d="M3 25.700l23.200 5" stroke="#9a9ea4" stroke-width="3.800" stroke-linecap="round"/><path d="M3 25.700l23.200 5" stroke="#d4d8dc" stroke-width="2.600" stroke-linecap="round"/>
<path d="M3 25.700l23.200 5" stroke="#fff" stroke-width="1" stroke-linecap="round" opacity="0.600" transform="translate(0 -0.600)"/>
<path d="M7.800 26.700l11.900 2.600M14 28l3-3.800" stroke="url(#nwC)" stroke-width="3.800" stroke-linecap="round"/></svg><div class="tx"><span style="letter-spacing:0.186px">Network and Sharing</span><span style="letter-spacing:-0.066px">Centre</span></div></div>
<div class="it" style="left:512px;top:421px"><svg class="ic" viewBox="0 0 32 32" width="32" height="32"><defs><radialGradient id="pgA" cx="0.450" cy="0.450" r="0.600"><stop offset="0" stop-color="#f8f8f8"/><stop offset="0.500" stop-color="#dcdedf"/><stop offset="1" stop-color="#b4b8ba"/></radialGradient></defs>
<rect x="1.900" y="5.900" width="30.400" height="22.400" rx="1" fill="#fff" stroke="#5e5c5a" stroke-width="1.300"/>
<rect x="1.900" y="5.300" width="30.400" height="1.800" rx="0.800" fill="#5e5c5a"/>
<path d="M26.200 6.500h.8m.8 0h.8m.8 0h.8" stroke="#eee" stroke-width="0.700"/>
<rect x="10" y="9" width="13.900" height="16.600" fill="url(#dpA)"/>
<path d="M4 9.500h3.900M4 12.500h3.900M4 15.400h3.900M4 18.500h3.900M4 21.500h3.900M4 24.400h3.900M26 9.500h3.900M26 12.500h3.900M26 15.400h3.900" stroke="#8c8c8c" stroke-width="1"/>
<circle cx="24.100" cy="23.900" r="8.800" fill="url(#pgA)" stroke="#b0b4b6" stroke-width="0.400"/>
<path d="M24.100 23.900l-8-3l.4-1.300z" fill="#f0a8e0"/><path d="M24.100 23.900l5.500-6.500l1 .8z" fill="#b0f0b8"/><path d="M24.100 23.900l6 6.500l-1.200 1z" fill="#fff" opacity="0.800"/>
<circle cx="24.100" cy="23.900" r="2.300" fill="#f4f4f4" stroke="#c8c8c8" stroke-width="0.500"/></svg><div class="tx"><span style="letter-spacing:-0.096px">Programs and Features</span></div></div>
<div class="it" style="left:512px;top:471px"><svg class="ic" viewBox="0 0 32 32" width="32" height="32"><defs><linearGradient id="seA" x1="0" y1="0" x2="1" y2="0"><stop offset="0" stop-color="#2230a8"/><stop offset="0.250" stop-color="#2a3cc0"/><stop offset="0.500" stop-color="#6a88f0"/><stop offset="0.700" stop-color="#2a3cc4"/><stop offset="1" stop-color="#3a50d8"/></linearGradient><linearGradient id="seB" x1="0" y1="0" x2="1" y2="0"><stop offset="0" stop-color="#7a7c80"/><stop offset="0.500" stop-color="#f4f4f4"/><stop offset="1" stop-color="#8a8c90"/></linearGradient></defs>
<path d="M3 5.500l9.600 26" stroke="#7a7c80" stroke-width="2.400" stroke-linecap="round"/>
<path d="M3 5.500l9.600 26" stroke="#eceef0" stroke-width="1" stroke-linecap="round" stroke-dasharray="1.500 1"/>
<circle cx="2.800" cy="4.800" r="1.900" fill="#b8babc" stroke="#6a6c70" stroke-width="0.500"/><circle cx="2.400" cy="4.300" r="0.700" fill="#fff"/>
<path d="M4 8.400c5 .5 9-4.500 14.500-4.100c3 .2 2.500 3.300 5.500 4.600c3 1.200 6.500 1 8.700.4c-.5 3-1.500 6-4 7.600c-2.500 1.500-5.500 1.600-7 .1c-1-1-1.500-2-2.500-2c-3 0-6.500 6.500-10.500 7.700z" fill="url(#seA)"/>
<path d="M4.800 9.500c5 0 9-4.500 13.500-4.200" stroke="#b0c0fc" stroke-width="0.600" fill="none"/>
<path d="M8.700 21.800c4-1.500 7-7 10.500-7.500" stroke="#a0b4fc" stroke-width="0.700" fill="none"/>
<path d="M23 10.500c2.500 1.500 6 1.500 8.500.5c-1 3-3 5-6 5.500" stroke="#8098f4" stroke-width="0.700" fill="none"/></svg><div class="tx"><span style="letter-spacing:-0.018px">Security and Maintenance</span></div></div>
<div class="it" style="left:512px;top:521px"><svg class="ic" viewBox="0 0 32 32" width="32" height="32"><defs><linearGradient id="sysA" x1="0" y1="0" x2="1" y2="1"><stop offset="0" stop-color="#36e4ec"/><stop offset="0.500" stop-color="#22a8e0"/><stop offset="1" stop-color="#1670d4"/></linearGradient></defs>
<rect x="15.300" y="24.500" width="3.500" height="3.800" fill="#9aa4ae"/>
<rect x="10.100" y="28" width="13.800" height="1.900" rx="0.400" fill="#2a2e34"/>
<rect x="3.500" y="5.300" width="27.100" height="19.200" rx="0.600" fill="url(#sysA)" stroke="#4e5258" stroke-width="1"/>
<g transform="translate(0 -15.900)"><rect x="17.600" y="19.600" width="14.700" height="10.800" fill="#fafafa" stroke="#5e5c5a" stroke-width="1.200"/><rect x="17" y="19" width="15.900" height="1.700" fill="#5e5c5a"/><path d="M28 20h.7m.8 0h.7" stroke="#eee" stroke-width="0.600"/><path d="M21.200 25.300l2.400 2.600l5-5.200" stroke="#1a80e0" stroke-width="2" fill="none" stroke-linecap="round" stroke-linejoin="round"/></g></svg><div class="tx"><span style="letter-spacing:-0.197px">System</span></div></div>
<div class="it" style="left:512px;top:571px"><svg class="ic" viewBox="0 0 32 32" width="32" height="32"><defs><radialGradient id="usA" cx="0.400" cy="0.300" r="0.800"><stop offset="0" stop-color="#a8d888"/><stop offset="1" stop-color="#5a9a3c"/></radialGradient><radialGradient id="usB" cx="0.500" cy="0.300" r="0.800"><stop offset="0" stop-color="#b8d8f4"/><stop offset="1" stop-color="#6a9cd0"/></radialGradient><radialGradient id="usC" cx="0.400" cy="0.350" r="0.700"><stop offset="0" stop-color="#fbe0c4"/><stop offset="1" stop-color="#d8a078"/></radialGradient><radialGradient id="usD" cx="0.350" cy="0.350" r="0.750"><stop offset="0" stop-color="#e0a878"/><stop offset="1" stop-color="#a06030"/></radialGradient></defs>
<path d="M5 13.500c-1-5 1-10.500 5.500-11.300c3-.5 6 .5 5 2.500c-1.500 2-1 6-2 9z" fill="#d4b860"/>
<path d="M1.900 24c-.5-5 2-8 5.500-9h6c3 1 5 4 4 9.500c-4 1.500-11 1.500-15.500-.5z" fill="url(#usA)"/>
<path d="M9 15.500l2.500 6l1.500 3l.5-3l-1-6z" fill="#f4f8f4"/>
<ellipse cx="10.400" cy="10" rx="3.300" ry="4.700" fill="url(#usC)"/>
<path d="M8.500 13.500l4 0l.5 3l-2.500 1.500l-2.500-1.500z" fill="#e8b890"/>
<path d="M14.700 29c-.5-5 1.500-9 5.500-10.200h6c4 1 6 5 5.400 10.500c-4.500 2-12 2-16.900-.3z" fill="url(#usB)"/>
<path d="M18.500 19l2 4l-1.500 7.500l-2-1c-.2-4 .3-8 1.500-10.500z" fill="#f8fafc"/>
<path d="M18 19.500l2.500 3.500l4.500-3.500z" fill="#a05a28"/>
<ellipse cx="19.900" cy="13.800" rx="4" ry="5.600" fill="url(#usD)"/>
<path d="M15.800 11c0-3.500 3-5.500 6-5.200c3 .3 4.500 3 4 6.500c-.3 2-1 3-1.800 3.500c0-2-1-4.500-2.500-5.500c-2-.5-4.200-.3-5.700.7z" fill="#54585c"/></svg><div class="tx"><span style="letter-spacing:-0.078px">User Accounts</span></div></div>
<div class="it" style="left:512px;top:621px"><svg class="ic" viewBox="0 0 32 32" width="32" height="32"><defs><linearGradient id="wfL" x1="0" y1="0" x2="0" y2="1"><stop offset="0" stop-color="#3a98d8"/><stop offset="1" stop-color="#2080c4"/></linearGradient></defs>
<rect x="6" y="3.100" width="16" height="23.400" fill="url(#foA)"/>
<path d="M6 3.100l5.700 4.500l-.9 22.400l-4.800-3.500z" fill="url(#foB)"/>
<path d="M13.200 13.800l10.100 1.800v16.500l-10.100-2.900z" fill="url(#wfL)"/>
<path d="M23.300 15.600l7.700-3.600v16.300l-7.700 3.800z" fill="#1a74b4"/>
<path d="M13.200 13.800l10.100-3.900l7.700 2.100l-7.700 3.600z" fill="#48a4e0"/>
<g stroke="#7cc4f0" stroke-width="0.500" fill="none" opacity="0.800"><path d="M13.200 17.500l10.100 2.200l7.700-3.700M13.200 21.200l10.100 2.500l7.700-3.800M13.200 25l10.100 2.800l7.700-3.900M16.500 14.500v15.600M20 15v16M27 13.900v16.300"/></g>
<rect x="15.300" y="26" width="3.200" height="4.300" fill="#5ab4ec" transform="skewY(16) translate(0 -4.800)"/>
<ellipse cx="24" cy="11.800" rx="1.200" ry="0.500" fill="#d8ecf8"/></svg><div class="tx"><span style="letter-spacing:-0.016px">Work Folders</span></div></div>
<div class="it" style="left:762px;top:171px"><svg class="ic" viewBox="0 0 32 32" width="32" height="32"><defs><linearGradient id="crA" x1="0" y1="0" x2="1" y2="0"><stop offset="0" stop-color="#c8a434"/><stop offset="0.300" stop-color="#ecd678"/><stop offset="1" stop-color="#d0b040"/></linearGradient><linearGradient id="crB" x1="0" y1="0" x2="1" y2="0"><stop offset="0" stop-color="#e4cc68"/><stop offset="1" stop-color="#b8962c"/></linearGradient><radialGradient id="crC" cx="0.400" cy="0.350" r="0.700"><stop offset="0" stop-color="#f4f4f4"/><stop offset="1" stop-color="#9a9c9e"/></radialGradient></defs>
<path d="M27 26.500l3 1.500l-10 3z" fill="#000" opacity="0.100"/>
<path d="M5.200 7c0-1 .5-1.500 1.500-1.500l12.400 1.800v23.700l-12.400-1.700c-1 0-1.500-.5-1.500-1.500z" fill="url(#crA)"/>
<path d="M19.100 7.400l7.700-1.700v20.500l-7.100 4.800z" fill="url(#crB)"/>
<path d="M6 5.500l7.200-1.500l13.600 1.600l-7.700 1.800z" fill="#dcc458"/>
<path d="M8 10.500l8.500 1.200v15.500l-8.500-1.300z" fill="none" stroke="#b8962c" stroke-width="0.700"/>
<circle cx="11.700" cy="19.400" r="5.600" fill="none" stroke="#8a8c8e" stroke-width="2"/>
<circle cx="11.700" cy="19.400" r="5.600" fill="none" stroke="#d8d8da" stroke-width="1"/>
<path d="M11.700 14v10.800M7 16.700l9.400 5.400M7 22.100l9.400-5.400" stroke="#c4c6c8" stroke-width="1.100"/>
<circle cx="11.700" cy="19.400" r="2.400" fill="url(#crC)"/></svg><div class="tx"><span style="letter-spacing:0.074px">Credential Manager</span></div></div>
<div class="it" style="left:762px;top:221px"><svg class="ic" viewBox="0 0 32 32" width="32" height="32"><defs><linearGradient id="dmA" x1="0" y1="0" x2="1" y2="0"><stop offset="0" stop-color="#c4c6c8"/><stop offset="1" stop-color="#a0a2a4"/></linearGradient><linearGradient id="dmB" x1="0" y1="0" x2="0" y2="1"><stop offset="0" stop-color="#f0f0f2"/><stop offset="1" stop-color="#c8cacc"/></linearGradient></defs>
<path d="M23.800 25.200l7.200-2.400v1.300l-7.200 2.400z" fill="#2a2c30"/>
<path d="M12.300 8.100l11.500-3.800l7.200 2.400l-11.300 3.800z" fill="#ececee"/>
<path d="M19.700 10.500l11.300-3.800v16.300l-11.300 4z" fill="url(#dmA)"/>
<path d="M12.300 8.100l7.400 2.400v10l-7.400-3z" fill="#3a3e42"/>
<rect x="14.900" y="11.600" width="2.500" height="2.600" fill="#20d040"/>
<path d="M8.700 16.800c2-.8 5-.5 7 .5l1.500 1.200l-3 1.200l-6-1.500z" fill="#1e2024"/>
<path d="M3.100 18.800l5.600-2.400l13.400 4.200l-5.400 2.400z" fill="#f2f2f4"/>
<path d="M3.100 18.800l13.600 4.200v8l-13.600-4.500z" fill="url(#dmB)"/>
<path d="M16.700 23l5.400-2.400v7.400l-5.400 3z" fill="#b0b2b4"/>
<rect x="5.300" y="19.900" width="1.700" height="3.600" rx="0.500" fill="#7a7c80" transform="skewY(17) translate(0 -1.700)"/>
<rect x="11.800" y="21.900" width="1.700" height="3.600" rx="0.500" fill="#7a7c80" transform="skewY(17) translate(0 -3.500)"/></svg><div class="tx"><span style="letter-spacing:-0.051px">Device Manager</span></div></div>
<div class="it" style="left:762px;top:271px"><svg class="ic" viewBox="0 0 32 32" width="32" height="32"><defs><radialGradient id="fhA" cx="0.450" cy="0.400" r="0.650"><stop offset="0" stop-color="#f4f4f4"/><stop offset="0.800" stop-color="#d4d6d8"/><stop offset="1" stop-color="#b4c4d0"/></radialGradient><linearGradient id="fhB" x1="0" y1="1" x2="1" y2="0"><stop offset="0" stop-color="#1ea01e"/><stop offset="1" stop-color="#58d048"/></linearGradient></defs>
<rect x="6" y="3.100" width="16" height="23.400" fill="url(#foA)"/>
<path d="M6 3.100l5.700 4.500l-.9 22.400l-4.800-3.500z" fill="url(#foB)"/>
<circle cx="25.300" cy="23.900" r="7.500" fill="url(#fhA)" stroke="#b0c4d4" stroke-width="0.900"/>
<g stroke="#8a8c90" stroke-width="0.700"><path d="M25.300 17.600v1.200M25.300 29v1.200M19 23.900h1.200M30.400 23.900h1.200"/></g>
<path d="M22.700 22.600l2.600 1.300l4-3.300" stroke="#2a2c30" stroke-width="1.100" fill="none"/>
<path d="M24.800 16.300c-4 .3-6.500 3.500-6.600 7.500l-4.100-.6l3.800 4.900l4.300-3.700l-2-.3c.3-2.500 2-4.600 4.800-5.200z" fill="url(#fhB)"/></svg><div class="tx"><span style="letter-spacing:0.108px">File History</span></div></div>
<div class="it" style="left:762px;top:321px"><svg class="ic" viewBox="0 0 32 32" width="32" height="32"><defs><linearGradient id="kbA" x1="0" y1="0" x2="1" y2="1"><stop offset="0" stop-color="#e4e8ec"/><stop offset="1" stop-color="#b8bec4"/></linearGradient></defs>
<path d="M2.200 20.600l9.200-3.500l20.400 7.200l-9.100 3.500z" fill="#2e343a"/>
<path d="M2.400 20l9-3.300l20.300 7.100l-9 3.200z" fill="url(#kbA)"/>
<g stroke="#9aa0a8" stroke-width="0.400" opacity="0.900"><path d="M5.400 18.900l20.300 7M8.400 17.800l20.300 7M6.500 21.400l7-2.700M10.500 22.800l7-2.700M14.500 24.200l7-2.700M18.500 25.600l7-2.700M22 26.600l6.500-2.500"/></g></svg><div class="tx"><span style="letter-spacing:0.006px">Keyboard</span></div></div>
<div class="it" style="left:762px;top:371px"><svg class="ic" viewBox="0 0 32 32" width="32" height="32"><defs><linearGradient id="pnS" x1="0" y1="1" x2="1" y2="0"><stop offset="0" stop-color="#000" stop-opacity="0.450"/><stop offset="1" stop-color="#000" stop-opacity="0"/></linearGradient></defs>
<path d="M3.500 31.800l25-9.500l2 1.500l-22 7.500z" fill="url(#pnS)"/>
<path d="M3.100 31.900c1-4 4-10 8-17c3.500-6 7-11.500 9-13.300c.8-.6 1.500 0 1.200 1c-1 3.500-4 9.500-7.500 16c-3.500 6.500-8 11.500-10.700 13.300z" fill="#2a2e32"/>
<path d="M8.300 19.500c2-3.500 8-13.500 11-16.500c.5-.3.800 0 .5.600c-2 4-6.500 12-9 17z" fill="#7cc4f0"/>
<path d="M13.700 11.500c1.500-2.500 4-6.500 5.300-7.800l.4.400c-1.200 2.200-3.300 5.900-4.600 8z" fill="#f4f8fc"/>
<path d="M8 19.300l2.800 1.500" stroke="#15181b" stroke-width="0.800"/></svg><div class="tx"><span style="letter-spacing:-0.295px">Pen and Touch</span></div></div>
<div class="it" style="left:762px;top:421px"><svg class="ic" viewBox="0 0 32 32" width="32" height="32"><rect x="17.300" y="24.500" width="3.600" height="3.800" fill="#9aa4ae"/>
<rect x="12" y="28" width="13.900" height="1.900" rx="0.400" fill="#2a2e34"/>
<rect x="5.400" y="5.300" width="27.100" height="19.200" rx="0.600" fill="url(#sysA)" stroke="#4e5258" stroke-width="1"/>
<circle cx="8.700" cy="25" r="6.300" fill="#f6f6f6"/>
<path d="M5.500 18.700a7 7 0 1 1 -3.700 7.500" stroke="#3fae1a" stroke-width="2.200" fill="none"/>
<path d="M1 17v5.700h6.200v-2.300h-3.300v-3.400z" fill="#3fae1a"/>
<path d="M8.500 20.500v4.500l3.300 2.800" stroke="#1e2226" stroke-width="0.900" fill="none"/></svg><div class="tx"><span style="letter-spacing:-0.138px">Recovery</span></div></div>
<div class="it" style="left:762px;top:471px"><svg class="ic" viewBox="0 0 32 32" width="32" height="32"><defs><linearGradient id="soA" x1="0" y1="0" x2="1" y2="1"><stop offset="0" stop-color="#d4d8dc"/><stop offset="0.500" stop-color="#b4c0c8"/><stop offset="1" stop-color="#a8d0e8"/></linearGradient><linearGradient id="soB" x1="0" y1="0" x2="1" y2="0"><stop offset="0" stop-color="#6a6c6e"/><stop offset="1" stop-color="#3a3c3e"/></linearGradient></defs>
<path d="M19 6.500c3-1.500 7 .5 9 4.500c2 4 1.500 8.500-1 10.500l-5 2.500z" fill="url(#soB)"/>
<ellipse cx="15.300" cy="17.300" rx="9.400" ry="13.900" fill="#3e4042" transform="rotate(-20 15.300 17.300)"/>
<ellipse cx="14.700" cy="17.200" rx="9.300" ry="13.800" fill="#9a9c9e" transform="rotate(-20 14.700 17.200)"/>
<ellipse cx="14.200" cy="17.100" rx="9.200" ry="13.800" fill="#4a4c4e" transform="rotate(-20 14.200 17.100)"/>
<ellipse cx="13.600" cy="17" rx="9.200" ry="13.800" fill="#fafafa" stroke="#d0d0d0" stroke-width="0.400" transform="rotate(-20 13.600 17)"/>
<ellipse cx="14.300" cy="17" rx="7.400" ry="11.600" fill="url(#soA)" transform="rotate(-20 14.300 17)"/>
<path d="M9 21l7.500-3" stroke="#e4e8ec" stroke-width="0.800" opacity="0.800"/>
<ellipse cx="16.700" cy="15.800" rx="2.300" ry="3.300" fill="#8aa8b8" transform="rotate(-20 16.700 15.800)"/>
<ellipse cx="16.400" cy="15.400" rx="1.500" ry="2" fill="#c8e8f8" transform="rotate(-20 16.400 15.400)"/></svg><div class="tx"><span style="letter-spacing:0.168px">Sound</span></div></div>
<div class="it" style="left:762px;top:521px"><svg class="ic" viewBox="0 0 32 32" width="32" height="32"><defs><linearGradient id="tbA" x1="0.300" y1="0" x2="0.600" y2="1"><stop offset="0" stop-color="#2a48d8"/><stop offset="0.300" stop-color="#5a80f0"/><stop offset="0.600" stop-color="#2038d0"/><stop offset="1" stop-color="#1428b8"/></linearGradient><linearGradient id="tbB" x1="0" y1="0" x2="1" y2="0"><stop offset="0" stop-color="#b8c0c8"/><stop offset="0.800" stop-color="#98a0a8"/><stop offset="1" stop-color="#484c52"/></linearGradient></defs>
<path d="M25 28l3 1.500l-3 2z" fill="#000" opacity="0.150"/>
<rect x="4.200" y="10" width="1.500" height="6" fill="#9098a0"/>
<path d="M5.200 2c0-.5.300-.8.800-.7l17.800 1.700c.5 0 .7.400.7.900l.5 26.500c0 .6-.3.800-.9.700l-18-3.700c-.6-.1-.9-.5-.9-1z" fill="url(#tbB)"/>
<path d="M7.300 4l13.900 1.500v21.600l-14.200-3.300z" fill="url(#tbA)"/>
<rect x="19.800" y="27.900" width="1.200" height="1.100" fill="#38e038"/>
<path d="M17.600 19.600l1.500-3l11.500-13.200l1 .8l-11.400 13.400z" fill="#1e2024"/>
<path d="M17.600 19.600l1.500-3l.6.500z" fill="#b0b4b8"/></svg><div class="tx"><span style="letter-spacing:-0.23px">Tablet PC Settings</span></div></div>
<div class="it two" style="left:762px;top:571px"><svg class="ic" viewBox="0 0 32 32" width="32" height="32"><defs><radialGradient id="fwA" cx="0.400" cy="0.400" r="0.700"><stop offset="0" stop-color="#58b4e4"/><stop offset="0.700" stop-color="#3088c0"/><stop offset="1" stop-color="#1c5c8c"/></radialGradient><linearGradient id="fwB" x1="0" y1="0" x2="1" y2="1"><stop offset="0" stop-color="#cc5c40"/><stop offset="1" stop-color="#a4341c"/></linearGradient></defs>
<circle cx="10.800" cy="10.800" r="10" fill="url(#fwA)"/>
<path d="M2 7c1.500-3 4-5 7.500-5.800c-.5 1.500-2.500 2.500-3 4.500c-.5 2 .5 3.500-1 5c-1.200 1.200-2 3-3.200 3.500c-.8-2.500-.9-5-.3-7.200z" fill="#c4e8f2"/>
<path d="M8 2.500c1.500-.8 3.500-.8 5 0c-1.500 1-3.500 2-5.500 2z" fill="#e4f6fa"/>
<path d="M17.500 5c2 1.500 3 4.500 3 7.500c-1.500 0-2.500-1.500-3-3.500c-.4-1.500-.5-2.800 0-4z" fill="#d4f0f6"/>
<path d="M5 12l4 1l2 1.500h-6z" fill="#c4e8f2"/>
<rect x="4.900" y="13.800" width="28.100" height="19.200" fill="#f0c4b4"/>
<g fill="url(#fwB)"><rect x="4.900" y="14.100" width="6.300" height="4.200"/><rect x="11.900" y="14.100" width="7.300" height="4.200"/><rect x="19.900" y="14.100" width="7.400" height="4.200"/><rect x="28" y="14.100" width="5" height="4.200"/>
<rect x="4.900" y="18.900" width="2.400" height="4.200"/><rect x="8" y="18.900" width="6.200" height="4.200"/><rect x="14.900" y="18.900" width="7.300" height="4.200"/><rect x="22.900" y="18.900" width="7.300" height="4.200"/><rect x="30.900" y="18.900" width="2.100" height="4.200"/>
<rect x="4.900" y="23.700" width="6.300" height="4.300"/><rect x="11.900" y="23.700" width="7.300" height="4.300"/><rect x="19.900" y="23.700" width="7.400" height="4.300"/><rect x="28" y="23.700" width="5" height="4.300"/>
<rect x="4.900" y="28.600" width="2.400" height="4.400"/><rect x="8" y="28.600" width="6.200" height="4.400"/><rect x="14.900" y="28.600" width="7.300" height="4.400"/><rect x="22.900" y="28.600" width="7.300" height="4.400"/><rect x="30.900" y="28.600" width="2.100" height="4.400"/></g></svg><div class="tx"><span style="letter-spacing:0.183px">Windows Defender</span><span style="letter-spacing:0.142px">Firewall</span></div></div>
<svg class="abs" style="left:0;top:410px;z-index:5" width="240" height="80" viewBox="0 0 240 80" fill="none"><path d="M13 59.800C10.500 55 9 50 9.500 44.800C9.800 40 10.300 36 11.200 32.400C12.500 27 15 21 18.700 17.400C22 14.500 27 13 32.400 12.400C42 11.300 52 11.100 62.300 11.200C75 11.300 88 11.500 99.700 12C110 12.500 120 13.500 129.600 15C145 17.500 160 21 174.500 25C186 28 198 30.500 207 33.600C212 35.500 217 38 218.100 41.100C219.500 45 218.500 48 215.700 51.100C212 55 206 59 199.500 61C192 63 183 64.300 174.500 64.800C158 65.800 141 66 124.700 66C108 66 91 64.800 74.800 63.500C62 62.500 49 61.300 37.400 59.800C29 58.700 21 57.200 15 55.300" stroke="#e2101c" stroke-width="2" stroke-linecap="round"/></svg>
<div id="focus"></div>
<div id="frame"></div>
</body>
</html>
